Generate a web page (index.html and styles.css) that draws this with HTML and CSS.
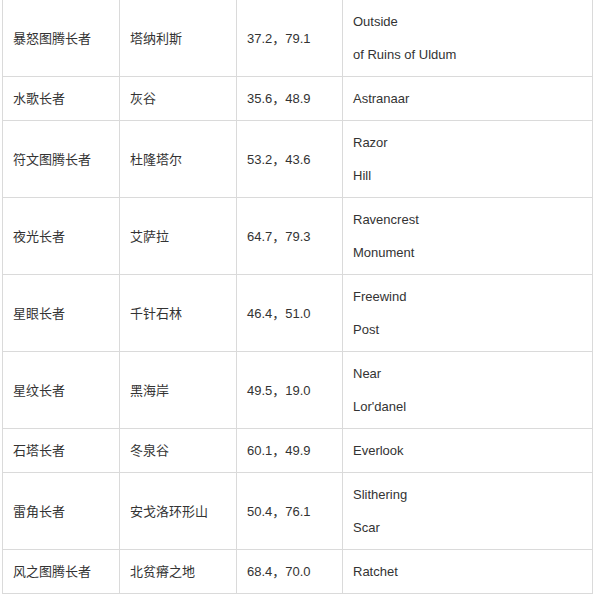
FILE: index.html
```html
<!DOCTYPE html>
<html lang="zh-CN">
<head>
<meta charset="utf-8">
<link rel="stylesheet" href="styles.css">
</head>
<body>
<table class="elders">
  <colgroup>
    <col class="c1"><col class="c2"><col class="c3"><col class="c4">
  </colgroup>
  <tbody>
    <tr><td>暴怒图腾长者</td><td>塔纳利斯</td><td>37.2，79.1</td><td>Outside<br>of Ruins of Uldum</td></tr>
    <tr><td>水歌长者</td><td>灰谷</td><td>35.6，48.9</td><td>Astranaar</td></tr>
    <tr><td>符文图腾长者</td><td>杜隆塔尔</td><td>53.2，43.6</td><td>Razor<br>Hill</td></tr>
    <tr><td>夜光长者</td><td>艾萨拉</td><td>64.7，79.3</td><td>Ravencrest<br>Monument</td></tr>
    <tr><td>星眼长者</td><td>千针石林</td><td>46.4，51.0</td><td>Freewind<br>Post</td></tr>
    <tr><td>星纹长者</td><td>黑海岸</td><td>49.5，19.0</td><td>Near<br>Lor'danel</td></tr>
    <tr><td>石塔长者</td><td>冬泉谷</td><td>60.1，49.9</td><td>Everlook</td></tr>
    <tr><td>雷角长者</td><td>安戈洛环形山</td><td>50.4，76.1</td><td>Slithering<br>Scar</td></tr>
    <tr><td>风之图腾长者</td><td>北贫瘠之地</td><td>68.4，70.0</td><td>Ratchet</td></tr>
  </tbody>
</table>
</body>
</html>
```

FILE: styles.css
```css
html, body {
  margin: 0;
  padding: 0;
  background: #ffffff;
}

body {
  font-family: "Liberation Sans", "Noto Sans CJK SC", sans-serif;
  font-size: 13px;
  color: #333333;
}

.elders {
  border-collapse: collapse;
  table-layout: fixed;
  width: 590px;
  margin: -1px 0 0 2px;
}

.c1 { width: 117px; }
.c2 { width: 117px; }
.c3 { width: 106px; }
.c4 { width: 250px; }

.elders td {
  border: 1px solid #dadada;
  padding: 5px 10px;
  line-height: 33px;
  vertical-align: middle;
  text-align: left;
  white-space: nowrap;
}
```
